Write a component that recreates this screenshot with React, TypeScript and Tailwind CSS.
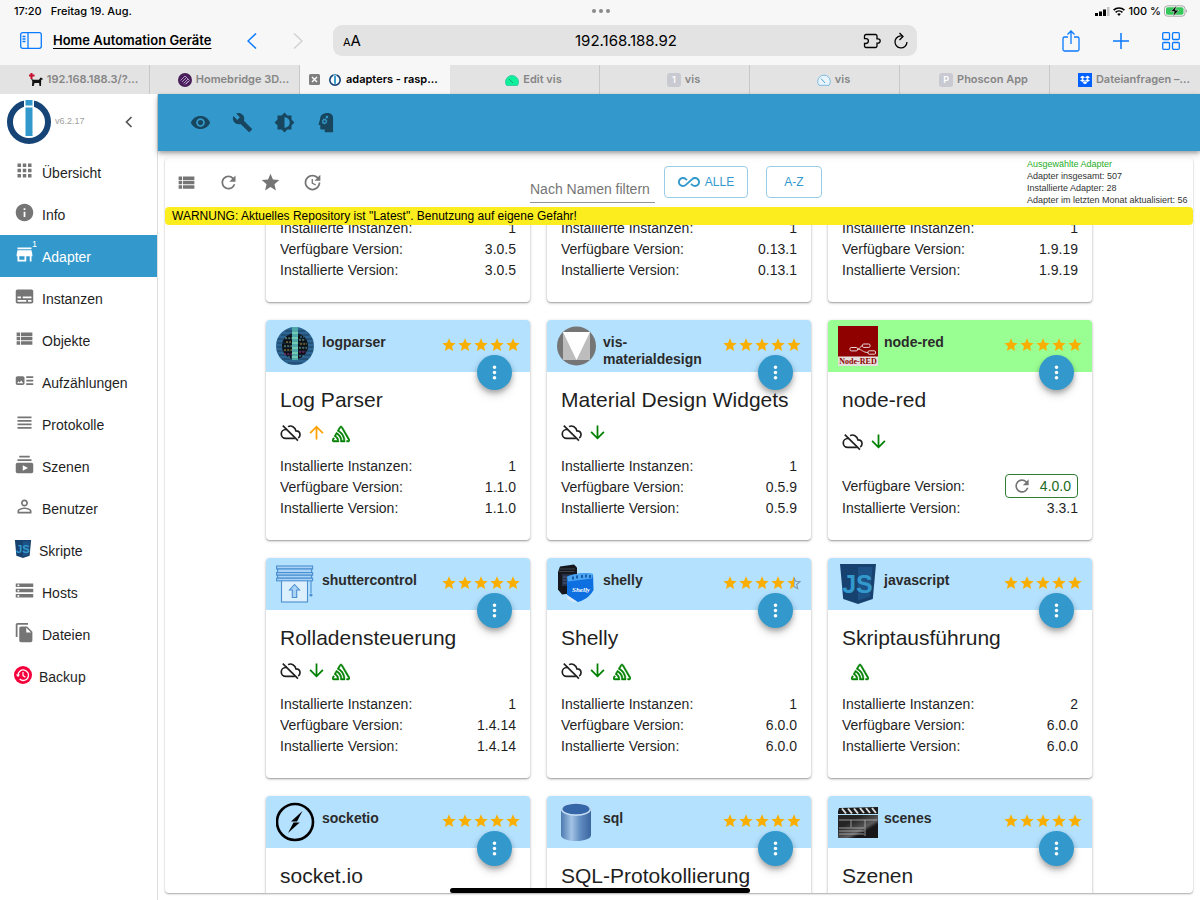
import { useLayoutEffect, useRef, useState, type ReactNode } from "react";
import type { IconType } from "react-icons";
import {
  MdAllInclusive,
  MdApps,
  MdArrowDownward,
  MdArrowUpward,
  MdArtTrack,
  MdBrightness6,
  MdBuild,
  MdFileCopy,
  MdInfo,
  MdMoreVert,
  MdPermIdentity,
  MdRefresh,
  MdStar,
  MdStorage,
  MdStore,
  MdSubscriptions,
  MdSubtitles,
  MdUpdate,
  MdViewHeadline,
  MdViewList,
  MdVisibility,
} from "react-icons/md";
import { SiDropbox, SiSentry } from "react-icons/si";

/* ---------- Logos ---------- */

function IoBrokerLogo({ className }: { className: string }) {
  return (
    <svg viewBox="0 0 44 44" className={className} aria-hidden="true">
      <circle cx="22" cy="22" r="19" fill="#fff" stroke="#164477" strokeWidth="6" />
      <rect x="17" y="0" width="10" height="37" fill="#fff" />
      <rect x="18.5" y="0" width="7" height="5.5" fill="#3399cc" />
      <rect x="18.5" y="7.5" width="7" height="28.5" fill="#3399cc" />
    </svg>
  );
}

function JsLogo({ className }: { className: string }) {
  return (
    <svg viewBox="0 0 40 40" className={className} aria-hidden="true">
      <path d="M2 0h36l-3.2 35L20 40 5.200 35z" fill="#17426f" />
      <path d="M20 3h14.500l-2.600 29.500L20 36.500z" fill="#1c5286" />
      <text x="19.5" y="29" textAnchor="middle" fontSize="25" fontWeight="700" fontFamily="Liberation Sans" fill="#3399cc">
        JS
      </text>
    </svg>
  );
}

function BackupLogo({ className }: { className: string }) {
  return (
    <svg viewBox="0 0 18 18" className={className} fill="none" aria-hidden="true">
      <circle cx="9" cy="9" r="9" fill="#f5003d" />
      <path d="M4 9.500a5.300 5.300 0 1 1 1.700 3.600" stroke="#fff" strokeWidth="1.300" />
      <path d="M1.900 8.600h4.200L4 11.200z" fill="#fff" />
      <path d="M9 6v3.600l2.400 1.600" stroke="#fff" strokeWidth="1.200" />
    </svg>
  );
}

function LogparserLogo() {
  return (
    <svg viewBox="0 0 40 40" className="size-10">
      <circle cx="19" cy="20" r="16" fill="#0c0f14" stroke="#2c6492" strokeWidth="6" />
      <g stroke="#16354f" strokeWidth="0.8">
        <path d="M9 5h20M5 9h28M2 13h34M1 17h36M1 21h36M1 25h36M3 29h32M6 33h26M12 37h14" />
      </g>
      <g strokeWidth="1.200" strokeDasharray="2 1.200">
        <path d="M9 12h7M8 20h8M23 14h6M23 22h8" stroke="#7fae9d" />
        <path d="M8 24h8M24 18h7M10 16h5" stroke="#b3943e" />
        <path d="M8 28h9M23 26h7" stroke="#a52c8e" />
        <path d="M12 31h4M23 30h5M24 11h4" stroke="#4f93b8" />
      </g>
      <rect x="16" y="1" width="6" height="33" fill="#4fa8a8" />
      <path d="M16 7h6M16 12h6M16 17h6M16 22h6M16 27h6M16 31h6" stroke="#72c9b4" strokeWidth="2" />
    </svg>
  );
}

function MaterialLogo() {
  return (
    <svg viewBox="0 0 40 40" className="size-10">
      <circle cx="19.500" cy="20" r="19.500" fill="#757575" />
      <path d="M6 6h27v28H6z" fill="#bdbdbd" />
      <path d="M6 6h27L19.500 34z" fill="#fff" />
    </svg>
  );
}

function NodeRedLogo() {
  return (
    <svg viewBox="0 0 40 40" className="size-10">
      <rect width="40" height="40" fill="#e3e0dd" />
      <rect width="40" height="30.500" fill="#8f0000" />
      <g fill="none" stroke="#e8d8d8" strokeWidth="1">
        <rect x="12" y="21.500" width="7.500" height="3.400" rx="1.200" />
        <rect x="24.500" y="18" width="7.500" height="3.400" rx="1.200" />
        <rect x="30" y="24.800" width="7.500" height="3.400" rx="1.200" />
        <path d="M19.500 23.200c3 0 2.500-3.500 5-3.500M19.500 23.200c5 0 5 3.300 10.500 3.300" />
      </g>
      <text x="20" y="37.500" textAnchor="middle" fontSize="8" fontWeight="700" fontFamily="Liberation Serif" fill="#8f0000">
        Node-RED
      </text>
    </svg>
  );
}

function ShutterLogo() {
  return (
    <svg viewBox="0 0 40 40" className="size-10" fill="#a9d3f7" stroke="#4a8fd0" strokeWidth="1.100">
      <rect x="5.500" y="15" width="26" height="23" fill="#dceffc" />
      <rect x="0.600" y="2" width="36" height="3" />
      <rect x="1.600" y="5" width="34" height="3.600" />
      <rect x="0.600" y="8.600" width="36" height="2.600" />
      <rect x="1.600" y="11.200" width="34" height="3" />
      <rect x="0.600" y="14.200" width="36" height="2.600" />
      <path d="M18.500 20.500l-5 5.500h2.800v7.500h4.400V26h2.800z" />
      <path d="M35 17v12" />
      <circle cx="35" cy="31" r="1" fill="#4a8fd0" />
    </svg>
  );
}

function ShellyLogo() {
  return (
    <svg viewBox="0 0 40 40" className="size-10">
      <path d="M3 2.500l14-2 3 3v25l-15 2-4-5V8z" fill="#15171c" />
      <path d="M5 10h10v12H5z" fill="#26324a" />
      <path d="M6 13h6M6 16h8M6 19h5" stroke="#55658a" strokeWidth="0.800" />
      <path d="M2 5h16M1.500 7.500h16" stroke="#3d424c" />
      <path d="M10 13c3-3 19-5 26-3l.5 16c-3 6-10 11-16 12L10 31z" fill="#0d6fe0" />
      <path d="M10 13c3-3 19-5 26-3l-1 4.500-24 3z" fill="#4ba5f2" />
      <path d="M16 12.500v3M20 11.500v3M25 11v3M29 10.500v3M33 11v3" stroke="#0a4c9e" strokeWidth="1.600" />
      <path d="M10 31l10.500 7c-5 .5-8.500-2-10.500-4z" fill="#dbe9f7" />
      <text x="24" y="28" textAnchor="middle" fontSize="7" fontStyle="italic" fontWeight="700" fontFamily="Liberation Serif" fill="#fff">
        Shelly
      </text>
    </svg>
  );
}

function SocketLogo() {
  return (
    <svg viewBox="0 0 40 40" className="size-10">
      <circle cx="19" cy="20" r="18" fill="none" stroke="#000" strokeWidth="2.600" />
      <path d="M15 19.500L26.500 9l-5.500 10.500zM12 31l5.500-10.500h6.200z" />
    </svg>
  );
}

function SqlLogo() {
  return (
    <svg viewBox="0 0 40 40" className="size-10">
      <defs>
        <linearGradient id="sqlBody">
          <stop offset="0" stopColor="#4c7ab0" />
          <stop offset="0.350" stopColor="#a3c3e5" />
          <stop offset="0.650" stopColor="#5f8bc0" />
          <stop offset="1" stopColor="#3a659f" />
        </linearGradient>
      </defs>
      <path d="M4 7v26c0 3.500 6 6 15 6s15-2.500 15-6V7z" fill="url(#sqlBody)" />
      <ellipse cx="19" cy="7.500" rx="15" ry="6.500" fill="#c4dbf2" />
      <ellipse cx="19" cy="7" rx="13.500" ry="5.300" fill="#3466a8" />
    </svg>
  );
}

function ScenesLogo() {
  return (
    <svg viewBox="0 0 40 40" className="size-10">
      <defs>
        <linearGradient id="clap" x1="0" y1="0" x2="1" y2="1">
          <stop offset="0.300" stopColor="#242424" />
          <stop offset="0.600" stopColor="#5c5c5c" />
          <stop offset="0.700" stopColor="#181818" />
        </linearGradient>
      </defs>
      <rect y="13" width="40" height="23" fill="url(#clap)" />
      <path d="M0 9l40-2v5H0zM0 9.500L1 6l39-1v4z" fill="#1a1a1a" />
      <path d="M4 6.500l4 5M10 6.500l4 5M16 6.500l4 5M22 6l4 5M28 6l4 5M34 6l4 5" stroke="#ddd" strokeWidth="2" />
      <path d="M1 18h38M1 26h25M1 29h25M1 32h25M13 18v7M27 18v16" stroke="#b5b5b5" strokeWidth="0.800" fill="none" />
    </svg>
  );
}

function ExpertIcon({ className }: { className?: string }) {
  return (
    <svg viewBox="0 0 24 24" className={className} fill="currentColor" aria-hidden="true">
      <path
        fillRule="evenodd"
        d="M13 1c-5 0-8.300 2.500-8.300 7L3 14c-.2.500.1.900.6.900h1.300v3.600c0 .9.700 1.500 1.600 1.500H10v3h9.500V6.500C19.500 3 17 1 13 1zM8.500 7.200l1.300.9 1.500-.6.500 1.500 1.300.9-.9 1.400.2 1.500-1.600.2-1.100 1.200-1.200-1.100-1.600-.1.300-1.600-.7-1.500 1.500-.9zM12.500 4.300a1.500 1.500 0 1 1 0 3 1.500 1.500 0 0 1 0-3z"
      />
      <circle cx="9.800" cy="10.800" r="1.300" />
    </svg>
  );
}

function CloudOffIcon() {
  return (
    <svg viewBox="0 0 24 24" className="size-[21px]" fill="none" stroke="currentColor" strokeWidth="1.900" aria-hidden="true">
      <path d="M9.200 5.300c3.600-1.900 8.300.3 9 4.900 2.700.1 4.700 1.800 4.700 4.300 0 1.600-.8 2.900-2.100 3.700" />
      <path d="M8 8.600H6.500A5 5 0 0 0 6.500 18.700H17" />
      <path d="M3.200 4.200l17.300 17" />
    </svg>
  );
}

/* ---------- Browser ---------- */

function Letter({ children }: { children: string }) {
  return (
    <span className="flex size-[14px] items-center justify-center rounded-[3px] bg-[#c9c9d2] text-[9px] font-semibold text-white">
      {children}
    </span>
  );
}

const TABS: { title: string; icon: ReactNode; active?: boolean }[] = [
  {
    title: "192.168.188.3/?...",
    icon: (
      <svg viewBox="0 0 14 14" className="size-[14px]">
        <path d="M2 6l3 .8h5l1.500-2.300 2 .8v1.400h-1.300L12 13h-1.500l-.4-3H5.500l-.8 3H3l.3-5z" fill="#111" />
        <path d="M2.500 0v6M0 2.500h5.500" stroke="#c8102e" strokeWidth="2" />
      </svg>
    ),
  },
  {
    title: "Homebridge 3D...",
    icon: (
      <svg viewBox="0 0 14 14" className="size-[14px]" fill="none" stroke="#c9b3dd" strokeWidth="0.800">
        <circle cx="7" cy="7" r="7" fill="#491f59" stroke="none" />
        <path d="M2.500 7.500L7 3l4.500 4.500L8 11M4 9l4.500-4.500M5.500 10.500L10 6M7 11.500l3.500-3.500" />
      </svg>
    ),
  },
  { title: "adapters - rasp...", icon: <IoBrokerLogo className="size-3" />, active: true },
  {
    title: "Edit vis",
    icon: (
      <svg viewBox="0 0 14 12" className="h-3 w-[14px]">
        <path d="M1.500 11.500a6.500 6.500 0 1 1 11 0z" fill="#0ef09a" stroke="#3fc9a5" />
        <path d="M4 5l4 4" stroke="#1fa37a" />
      </svg>
    ),
  },
  { title: "vis", icon: <Letter>1</Letter> },
  {
    title: "vis",
    icon: (
      <svg viewBox="0 0 14 12" className="h-3 w-[14px]">
        <path d="M2 11.300a6.300 6.300 0 1 1 10 0z" fill="#e9f4fc" stroke="#7dbbe3" />
        <path d="M4 4.500l4 4.500" stroke="#4f9fd3" />
      </svg>
    ),
  },
  { title: "Phoscon App", icon: <Letter>P</Letter> },
  {
    title: "Dateianfragen –...",
    icon: (
      <span className="flex size-[14px] items-center justify-center bg-[#0061fe] text-white">
        <SiDropbox className="size-[10px]" />
      </span>
    ),
  },
];

function BrowserHeader() {
  return (
    <header className="shrink-0 bg-[#f7f7f7] font-['Inter',sans-serif] text-black">
      <div className="grid h-[22px] grid-cols-3 items-center pr-3 pl-[14px] text-[11px] font-medium">
        <div className="flex gap-[9px]">
          <span>17:20</span>
          <span>Freitag 19. Aug.</span>
        </div>
        <div className="flex justify-center gap-[3px]">
          <span className="size-1 rounded-full bg-[#8a8a8a]" />
          <span className="size-1 rounded-full bg-[#8a8a8a]" />
          <span className="size-1 rounded-full bg-[#8a8a8a]" />
        </div>
        <div className="flex items-center justify-end gap-[3px]">
          <svg viewBox="0 0 15 9" className="h-[9px] w-[15px]">
            <path d="M0 6h3v3H0zM4 4.500h3V9H4zM8 2.500h3V9H8z" />
            <path d="M12 0h2.500v9H12z" fill="#c4c4c4" />
          </svg>
          <svg viewBox="0 0 12 9" className="h-[9px] w-3" fill="none" stroke="currentColor" strokeWidth="1.600">
            <path d="M0.600 3.200a7.800 7.800 0 0 1 10.800 0M2.600 5.300a4.900 4.900 0 0 1 6.800 0" />
            <path d="M6 9L4.200 7.100a2.600 2.600 0 0 1 3.600 0z" fill="currentColor" stroke="none" />
          </svg>
          <span>100 %</span>
          <svg viewBox="0 0 24 12" className="h-3 w-6">
            <rect x="0.500" y="0.800" width="20.500" height="10.400" rx="3" fill="none" stroke="#a8a8a8" />
            <rect x="2" y="2.300" width="17.500" height="7.400" rx="1.600" fill="#34c759" />
            <path d="M22 4.200a2 2 0 0 1 0 3.600z" fill="#a8a8a8" />
            <path d="M12.500 0.500L6.800 6.600h3.500L9 11.500l5.800-6.300h-3.500z" stroke="#f7f7f7" strokeWidth="0.500" />
          </svg>
        </div>
      </div>

      <div className="flex h-[43px] items-start pt-[3px] pr-5 pl-5">
        <div className="flex h-[31px] w-[313px] items-center text-[#0a7aff]">
          <button aria-label="Seitenleiste" className="w-[33px]">
            <svg viewBox="0 0 22 17" className="h-[17px] w-[22px]" fill="none" stroke="currentColor" strokeWidth="1.300">
              <rect x="0.700" y="0.700" width="20.600" height="15.600" rx="2" />
              <path d="M8 1v15M2.500 4.500h3M2.500 7h3M2.500 9.500h3" />
            </svg>
          </button>
          <a href="#tabs" className="pt-px text-[13px] font-semibold text-black underline underline-offset-3">
            Home Automation Geräte
          </a>
          <div className="ml-auto flex gap-9 pr-[30px]">
            <button aria-label="Zurück">
              <svg viewBox="0 0 10 16" className="h-4 w-[10px]" fill="none" stroke="currentColor" strokeWidth="1.500">
                <path d="M9 0.500L1 8l8 7.500" />
              </svg>
            </button>
            <button aria-label="Vorwärts" className="text-[#cfcfcf]">
              <svg viewBox="0 0 10 16" className="h-4 w-[10px]" fill="none" stroke="currentColor" strokeWidth="1.300">
                <path d="M1 0.500L9 8l-8 7.500" />
              </svg>
            </button>
          </div>
        </div>
        <div className="flex h-[31px] flex-1 items-center rounded-[9px] bg-[#e3e3e3] pt-px pr-2 pl-[10px]">
          <button aria-label="Darstellung" className="w-[46px] text-left text-[15px]">
            <span className="text-[11px]">A</span>A
          </button>
          <span className="flex-1 text-center text-[15px]">192.168.188.92</span>
          <button aria-label="Erweiterungen">
            <svg viewBox="0 0 20 18" className="h-[18px] w-5" fill="none" stroke="currentColor" strokeWidth="1.300">
              <path d="M3 2.500h9.500A1.500 1.500 0 0 1 14 4v2.800h1a2.200 2.200 0 1 1 0 4.400h-1V14a1.500 1.500 0 0 1-1.500 1.500H3A1.500 1.500 0 0 1 1.500 14v-2.500H3a2.400 2.400 0 0 0 0-4.800H1.500V4A1.500 1.500 0 0 1 3 2.500z" />
            </svg>
          </button>
          <button aria-label="Neu laden" className="ml-[10px]">
            <svg viewBox="0 0 16 18" className="h-[18px] w-4" fill="none" stroke="currentColor" strokeWidth="1.300">
              <path d="M10 4.200A6 6 0 1 0 14 10M6.500 1L10 4.500 6.500 8" />
            </svg>
          </button>
        </div>
        <div className="flex h-[31px] w-[263px] items-center justify-end gap-[33px] text-[#0a7aff]">
          <button aria-label="Teilen">
            <svg viewBox="0 0 18 22" className="h-[22px] w-[18px]" fill="none" stroke="currentColor" strokeWidth="1.300">
              <path d="M6 7H2.500A1.500 1.500 0 0 0 1 8.500v11A1.500 1.500 0 0 0 2.500 21h13a1.500 1.500 0 0 0 1.500-1.500v-11A1.500 1.500 0 0 0 15.500 7H12M9 14V1.500M5.500 4.500L9 1l3.500 3.500" />
            </svg>
          </button>
          <button aria-label="Neuer Tab">
            <svg viewBox="0 0 16 16" className="size-4" stroke="currentColor" strokeWidth="1.500">
              <path d="M8 0v16M0 8h16" />
            </svg>
          </button>
          <button aria-label="Tabübersicht">
            <svg viewBox="0 0 18 18" className="size-[18px]" fill="none" stroke="currentColor" strokeWidth="1.300">
              <rect x="0.700" y="0.700" width="6.800" height="6.800" rx="1" />
              <rect x="10.500" y="0.700" width="6.800" height="6.800" rx="1" />
              <rect x="0.700" y="10.500" width="6.800" height="6.800" rx="1" />
              <rect x="10.500" y="10.500" width="6.800" height="6.800" rx="1" />
            </svg>
          </button>
        </div>
      </div>

      <div className="grid h-[29px] grid-cols-8 text-[11px] font-semibold">
        {TABS.map((tab, i) =>
          tab.active ? (
            <button key={i} className="flex items-center gap-[5px] pl-[9px] whitespace-nowrap">
              <svg viewBox="0 0 11 11" className="mr-1 size-[11px]">
                <rect width="11" height="11" rx="1.500" fill="#7f7f7f" />
                <path d="M3 3l5 5M8 3L3 8" stroke="#fff" strokeWidth="1.400" />
              </svg>
              {tab.icon}
              {tab.title}
            </button>
          ) : (
            <button
              key={i}
              className="flex items-center justify-center gap-1 border-r border-[#c8c8c8] bg-[#e3e3e3] pl-[18px] whitespace-nowrap text-[#868686] last:border-r-0"
            >
              {tab.icon}
              {tab.title}
            </button>
          ),
        )}
      </div>
    </header>
  );
}

/* ---------- Sidebar ---------- */

const MENU: { label: string; icon?: IconType; logo?: ReactNode; badge?: number; active?: boolean }[] = [
  { label: "Übersicht", icon: MdApps },
  { label: "Info", icon: MdInfo },
  { label: "Adapter", icon: MdStore, badge: 1, active: true },
  { label: "Instanzen", icon: MdSubtitles },
  { label: "Objekte", icon: MdViewList },
  { label: "Aufzählungen", icon: MdArtTrack },
  { label: "Protokolle", icon: MdViewHeadline },
  { label: "Szenen", icon: MdSubscriptions },
  { label: "Benutzer", icon: MdPermIdentity },
  { label: "Skripte", logo: <JsLogo className="mb-1 size-[18px]" /> },
  { label: "Hosts", icon: MdStorage },
  { label: "Dateien", icon: MdFileCopy },
  { label: "Backup", logo: <BackupLogo className="mb-1 size-[18px]" /> },
];

function Sidebar() {
  return (
    <aside className="w-[158px] shrink-0 border-r border-[#dedede]">
      <div className="flex h-[57px] items-center pb-px pl-[7px]">
        <IoBrokerLogo className="size-11" />
        <span className="ml-1 text-[9px] text-[#a0a0a0]">v6.2.17</span>
        <button aria-label="Menü einklappen" className="mr-[23px] ml-auto text-[#555]">
          <svg viewBox="0 0 10 12" className="h-3 w-[10px]" fill="none" stroke="currentColor" strokeWidth="1.700">
            <path d="M7.500 1L2.500 6l5 5" />
          </svg>
        </button>
      </div>
      <nav>
        {MENU.map(({ label, icon: Icon, logo, badge, active }) => (
          <a
            key={label}
            href={`#${label.toLowerCase()}`}
            className={`relative flex h-[42px] items-center gap-[7px] pt-px pl-[14px] text-[14px] ${
              active ? "bg-[#3399cc] text-white" : "text-[#1f1f1f]"
            }`}
          >
            {Icon ? <Icon className={`mb-1 size-[21px] ${active ? "text-white" : "text-[#757575]"}`} /> : logo}
            <span className="pt-0.5">{label}</span>
            {badge && <span className="absolute top-[3px] left-8 text-[9px]">{badge}</span>}
          </a>
        ))}
      </nav>
    </aside>
  );
}

/* ---------- Adapter cards ---------- */

type Adapter = {
  name?: string;
  title?: string;
  logo?: ReactNode;
  stars?: number;
  flags?: ("cloud" | "up" | "down" | "sentry")[];
  instances?: number;
  available?: string;
  installed?: string;
  update?: boolean;
};

const ADAPTERS: Adapter[] = [
  { instances: 1, available: "3.0.5", installed: "3.0.5" },
  { instances: 1, available: "0.13.1", installed: "0.13.1" },
  { instances: 1, available: "1.9.19", installed: "1.9.19" },
  { name: "logparser", title: "Log Parser", logo: <LogparserLogo />, flags: ["cloud", "up", "sentry"], instances: 1, available: "1.1.0", installed: "1.1.0" },
  { name: "vis-materialdesign", title: "Material Design Widgets", logo: <MaterialLogo />, flags: ["cloud", "down"], instances: 1, available: "0.5.9", installed: "0.5.9" },
  { name: "node-red", title: "node-red", logo: <NodeRedLogo />, flags: ["cloud", "down"], available: "4.0.0", installed: "3.3.1", update: true },
  { name: "shuttercontrol", title: "Rolladensteuerung", logo: <ShutterLogo />, flags: ["cloud", "down", "sentry"], instances: 1, available: "1.4.14", installed: "1.4.14" },
  { name: "shelly", title: "Shelly", logo: <ShellyLogo />, stars: 4.5, flags: ["cloud", "down", "sentry"], instances: 1, available: "6.0.0", installed: "6.0.0" },
  { name: "javascript", title: "Skriptausführung", logo: <JsLogo className="size-10" />, flags: ["sentry"], instances: 2, available: "6.0.0", installed: "6.0.0" },
  { name: "socketio", title: "socket.io", logo: <SocketLogo /> },
  { name: "sql", title: "SQL-Protokollierung", logo: <SqlLogo /> },
  { name: "scenes", title: "Szenen", logo: <ScenesLogo /> },
];

const FLAG_ICONS = {
  cloud: <CloudOffIcon key="cloud" />,
  up: <MdArrowUpward key="up" className="size-[21px] text-[#ffa000]" />,
  down: <MdArrowDownward key="down" className="size-[21px] text-[#008000]" />,
  sentry: <SiSentry key="sentry" strokeWidth="0.7" stroke="currentColor" className="mt-[3px] size-[18px] text-[#008000]" />,
};

function HalfStar() {
  return (
    <svg viewBox="0 0 24 24" className="size-4" aria-hidden="true">
      <path
        d="M12 3.500l2.500 6 6.500.6-5 4.200 1.600 6.300-5.600-3.400z"
        fill="none"
        stroke="#7f97a6"
        strokeWidth="1.600"
      />
      <path d="M12 2v15.270L5.820 21l1.640-7.030L2 9.240l7.190-.61z" fill="currentColor" />
    </svg>
  );
}

function Row({ label, children }: { label: string; children: ReactNode }) {
  return (
    <div className="flex items-center justify-between">
      <dt>{label}</dt>
      <dd>{children}</dd>
    </div>
  );
}

function AdapterCard({ adapter }: { adapter: Adapter }) {
  const { name, title, logo, stars = 5, flags = [], instances, available, installed, update } = adapter;

  return (
    <article className="flex h-[220px] w-[264px] flex-col rounded-[4px] bg-white shadow-[0_1px_3px_rgba(0,0,0,0.3),0_1px_1px_rgba(0,0,0,0.15)]">
      <div className={`relative flex h-[52px] shrink-0 rounded-t-[4px] pt-[6px] pr-[9px] pl-[10px] ${update ? "bg-[#9aff93]" : "bg-[#b3e1fe]"}`}>
        {name && (
          <>
            {logo}
            <h3 className="ml-[6px] min-w-0 flex-1 pt-2 text-[14px] leading-[17px] font-bold text-[#2b2b2b]">{name}</h3>
            <div className="flex h-[38px] items-center text-[#faaf00]" aria-label={`${stars} Sterne`}>
              {[1, 2, 3, 4, 5].map((n) => (n <= stars ? <MdStar key={n} className="size-4" /> : <HalfStar key={n} />))}
            </div>
            <button
              aria-label="Menü"
              className="absolute right-[18px] -bottom-[18px] flex size-[35px] items-center justify-center rounded-full bg-[#3399cc] text-white shadow-[0_3px_5px_rgba(0,0,0,0.25),0_5px_10px_rgba(0,0,0,0.15)]"
            >
              <MdMoreVert className="size-[21px]" />
            </button>
          </>
        )}
      </div>
      <div className="flex flex-1 flex-col justify-between px-[14px] pt-[14px] pb-[21px] text-[14px] leading-[21px] text-[#1f1f1f]">
        <h2 className="text-[21px] leading-[27px] whitespace-nowrap">{title}</h2>
        <div className={`flex h-[25px] gap-[5px] pb-1 ${flags.length === 1 ? "pl-[9px]" : ""}`}>
          {flags.map((flag) => FLAG_ICONS[flag])}
        </div>
        {installed && (
          <dl>
            {instances && <Row label="Installierte Instanzen:">{instances}</Row>}
            <Row label="Verfügbare Version:">
              {update ? (
                <button className="flex h-6 items-center gap-2 rounded-[4px] border border-[#2f7d33] px-[6px] text-[#1b6a20]">
                  <MdRefresh className="size-5 text-[#757575]" />
                  {available}
                </button>
              ) : (
                available
              )}
            </Row>
            <Row label="Installierte Version:">{installed}</Row>
          </dl>
        )}
      </div>
    </article>
  );
}

/* ---------- Page ---------- */

const iconButton = "flex size-[42px] items-center justify-center";

export default function App() {
  const [filter, setFilter] = useState("");
  const listRef = useRef<HTMLDivElement>(null);

  // Open the list scrolled down past the head of the first row
  useLayoutEffect(() => {
    if (listRef.current) listRef.current.scrollTop = 143;
  }, []);

  const visible = ADAPTERS.filter((a) => !filter || a.name?.includes(filter.toLowerCase()));

  return (
    <div className="flex h-screen flex-col overflow-hidden bg-white font-['Liberation_Sans',Arial,sans-serif]">
      <BrowserHeader />

      <div className="flex min-h-0 flex-1">
        <Sidebar />

        <div className="flex min-w-0 flex-1 flex-col">
          <div className="z-10 flex h-[57px] shrink-0 items-center bg-[#3399cc] pb-px pl-[21px] text-[#17465e] shadow-[0_2px_4px_rgba(0,0,0,0.3),0_4px_8px_rgba(0,0,0,0.12)]">
            <button aria-label="Sichtbarkeit" className={iconButton}>
              <MdVisibility className="size-[21px]" />
            </button>
            <button aria-label="Einstellungen" className={iconButton}>
              <MdBuild className="size-[21px]" />
            </button>
            <button aria-label="Farbschema" className={iconButton}>
              <MdBrightness6 className="size-[21px]" />
            </button>
            <button aria-label="Expertenmodus" className={iconButton}>
              <ExpertIcon className="size-[21px]" />
            </button>
          </div>

          <main className="flex min-h-0 flex-1 flex-col p-[7px]">
            <div className="flex min-h-0 flex-1 flex-col rounded-[4px] shadow-[0_1px_2px_rgba(0,0,0,0.35)]">
              <div className="flex h-[49px] shrink-0 items-center pr-[5px] pb-px text-[#757575]">
                <button aria-label="Listenansicht" className={iconButton}>
                  <MdViewList className="size-[21px]" />
                </button>
                <button aria-label="Aktualisieren" className={iconButton}>
                  <MdRefresh className="size-[21px]" />
                </button>
                <button aria-label="Nur installierte" className={iconButton}>
                  <MdStar className="size-[21px]" />
                </button>
                <button aria-label="Updates" className={iconButton}>
                  <MdUpdate className="size-[21px]" />
                </button>
                <div className="flex flex-1 items-center justify-center pr-2">
                  <input
                    type="text"
                    aria-label="Nach Namen filtern"
                    placeholder="Nach Namen filtern"
                    value={filter}
                    onChange={(e) => setFilter(e.target.value)}
                    className="mt-[14px] h-7 w-[125px] border-b border-[#949494] text-[14px] text-[#1f1f1f] outline-none placeholder:text-[#757575]"
                  />
                  <button className="ml-[9px] flex h-8 w-[84px] items-center justify-center gap-[5px] rounded-[4px] border border-[#99cce6] text-[12px] text-[#3399cc]">
                    <MdAllInclusive className="size-[22px]" />
                    ALLE
                  </button>
                  <button className="ml-[18px] h-8 w-14 rounded-[4px] border border-[#99cce6] text-[12px] text-[#3399cc]">
                    A-Z
                  </button>
                </div>
                <div className="w-[161px] text-[9px] leading-[12px] whitespace-nowrap text-[#333]">
                  <p className="text-[#1fae1f]">Ausgewählte Adapter</p>
                  <p>Adapter insgesamt: 507</p>
                  <p>Installierte Adapter: 28</p>
                  <p>Adapter im letzten Monat aktualisiert: 56</p>
                </div>
              </div>

              <div className="h-[18px] shrink-0 rounded-[4px] bg-[#fcee1e] px-[7px] text-[12px] leading-[18px] text-black">
                WARNUNG: Aktuelles Repository ist "Latest". Benutzung auf eigene Gefahr!
              </div>

              <div ref={listRef} className="min-h-0 flex-1 overflow-y-auto [scrollbar-width:none]">
                <div className="flex flex-wrap justify-center gap-x-[17px] gap-y-[18px]">
                  {visible.map((adapter, i) => (
                    <AdapterCard key={adapter.name ?? i} adapter={adapter} />
                  ))}
                </div>
              </div>
            </div>
          </main>
        </div>
      </div>

      <div className="fixed bottom-[7px] left-1/2 z-20 h-[5px] w-1/4 -translate-x-1/2 rounded-full bg-black" />
    </div>
  );
}
